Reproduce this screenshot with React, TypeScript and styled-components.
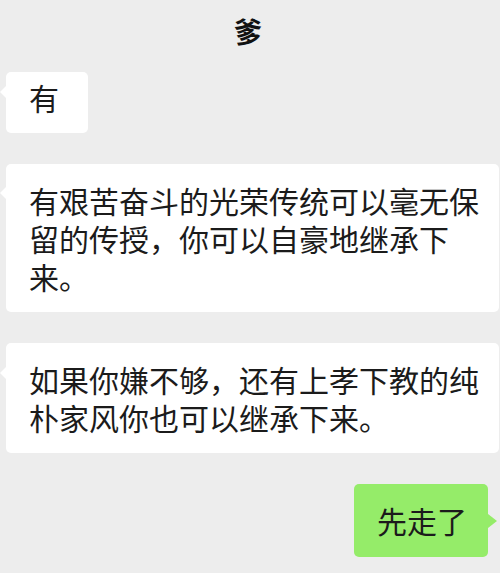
import React from "react";
import styled, { createGlobalStyle, css } from "styled-components";

const GlobalStyle = createGlobalStyle`
  html, body {
    margin: 0;
    padding: 0;
    background: #ededed;
  }
  body {
    font-family: "Noto Sans CJK SC", "Noto Sans", sans-serif;
    color: #1b1b1b;
  }
`;

const Screen = styled.div`
  width: 500px;
  height: 573px;
  overflow: hidden;
  background: #ededed;
  display: flex;
  flex-direction: column;
`;

const Header = styled.header`
  padding-top: 12px;
  height: 38px;
  display: flex;
  justify-content: center;
  font-size: 28px;
  line-height: 38px;
  font-weight: 600;
  color: #111;
`;

const Title = styled.h1`
  margin: 0 0 0 -4px;
  font: inherit;
`;

const Messages = styled.main`
  margin-top: 22px;
  display: flex;
  flex-direction: column;
  gap: 31px;
  padding: 0 12px 0 6px;
`;

const Row = styled.div<{ $mine?: boolean }>`
  display: flex;
  justify-content: ${(p) => (p.$mine ? "flex-end" : "flex-start")};
  margin-right: ${(p) => (p.$mine ? "0" : "-11px")};
`;

const Bubble = styled.div<{
  $mine?: boolean;
  $pad: string;
  $tailTop: number;
}>`
  position: relative;
  box-sizing: border-box;
  padding: ${(p) => p.$pad};
  border-radius: 5px;
  font-size: 30px;
  line-height: 38px;
  color: #1b1b1b;
  line-break: strict;
  ${(p) =>
    p.$mine
      ? css`
          background: #95ec69;
          &::after {
            content: "";
            position: absolute;
            right: -9px;
            top: ${p.$tailTop}px;
            border-style: solid;
            border-width: 7px 0 7px 9px;
            border-color: transparent transparent transparent #95ec69;
          }
        `
      : css`
          background: #ffffff;
          flex: 0 1 auto;
          &::before {
            content: "";
            position: absolute;
            left: -6px;
            top: ${p.$tailTop}px;
            border-style: solid;
            border-width: 6px 6px 6px 0;
            border-color: transparent #ffffff transparent transparent;
          }
        `}
`;

export default function App() {
  return (
    <>
      <GlobalStyle />
      <Screen>
        <Header>
          <Title>爹</Title>
        </Header>
        <Messages>
          <Row>
            <Bubble $pad="6px 29px 17px 23px" $tailTop={14}>
              有
            </Bubble>
          </Row>
          <Row>
            <Bubble $pad="17px 16px 17px 23px" $tailTop={23}>
              有艰苦奋斗的光荣传统可以毫无保留的传授，你可以自豪地继承下来。
            </Bubble>
          </Row>
          <Row>
            <Bubble $pad="17px 16px 17px 23px" $tailTop={24}>
              如果你嫌不够，还有上孝下教的纯朴家风你也可以继承下来。
            </Bubble>
          </Row>
          <Row $mine>
            <Bubble $mine $pad="17px 21px 18px 23px" $tailTop={30}>
              先走了
            </Bubble>
          </Row>
        </Messages>
      </Screen>
    </>
  );
}
